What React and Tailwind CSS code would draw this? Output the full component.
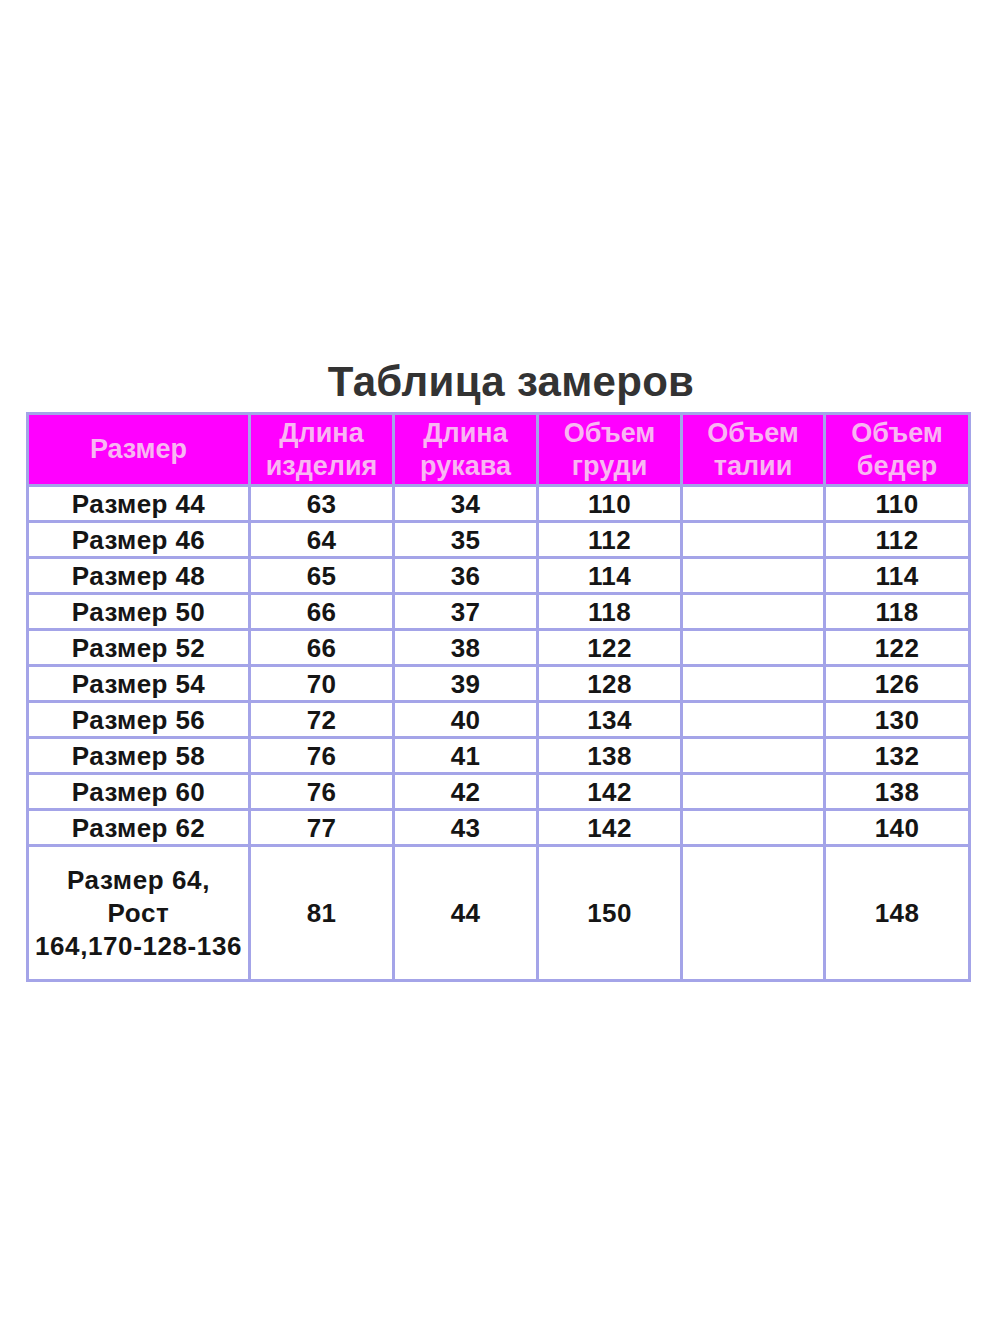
export default function App() {
  const rows = [
    ["Размер 44", "63", "34", "110", "", "110"],
    ["Размер 46", "64", "35", "112", "", "112"],
    ["Размер 48", "65", "36", "114", "", "114"],
    ["Размер 50", "66", "37", "118", "", "118"],
    ["Размер 52", "66", "38", "122", "", "122"],
    ["Размер 54", "70", "39", "128", "", "126"],
    ["Размер 56", "72", "40", "134", "", "130"],
    ["Размер 58", "76", "41", "138", "", "132"],
    ["Размер 60", "76", "42", "142", "", "138"],
    ["Размер 62", "77", "43", "142", "", "140"],
  ];
  const widths = ["w-[222px]", "w-[144px]", "w-[144px]", "w-[144px]", "w-[143px]", "w-[145px]"];
  const headers = [["Размер"], ["Длина", "изделия"], ["Длина", "рукава"], ["Объем", "груди"], ["Объем", "талии"], ["Объем", "бедер"]];
  return (
    <div className="w-[1000px] h-[1333px] bg-white pt-[357px]" style={{ fontFamily: '"Liberation Sans", Arial, sans-serif' }}>
      <h1 className="text-center text-[42px] leading-[50px] font-bold text-[#333333] pl-[22px] tracking-[0.3px]">Таблица замеров</h1>
      <table className="ml-[26px] mt-[5px] w-[942px] border-collapse border-[3px] border-[#a4a4e8] table-fixed">
        <colgroup>
          {widths.map((w, i) => <col key={i} className={w} />)}
        </colgroup>
        <thead>
          <tr className="h-[72px] bg-[#ff00ff]">
            {headers.map((h, i) => (
              <th key={i} className="border-[3px] border-[#a4a4e8] p-0 text-center font-bold text-[27px] leading-[33px] text-[#f8b6f2]">
                {h.map((l, j) => <div key={j}>{l}</div>)}
              </th>
            ))}
          </tr>
        </thead>
        <tbody>
          {rows.map((r, i) => (
            <tr key={i} className="h-[36px]">
              {r.map((c, j) => (
                <td key={j} className="border-[3px] border-[#a4a4e8] p-0 text-center font-bold text-[26px] leading-[30px] tracking-[0.4px] text-[#151515]">{c}</td>
              ))}
            </tr>
          ))}
          <tr className="h-[135px]">
            <td className="border-[3px] border-[#a4a4e8] p-0 text-center font-bold text-[26px] leading-[33px] tracking-[0.6px] text-[#151515] whitespace-nowrap">
              <div>Размер 64,</div>
              <div>Рост</div>
              <div>164,170-128-136</div>
            </td>
            {["81", "44", "150", "", "148"].map((c, j) => (
              <td key={j} className="border-[3px] border-[#a4a4e8] p-0 text-center font-bold text-[26px] leading-[30px] tracking-[0.4px] text-[#151515]">{c}</td>
            ))}
          </tr>
        </tbody>
      </table>
    </div>
  );
}
